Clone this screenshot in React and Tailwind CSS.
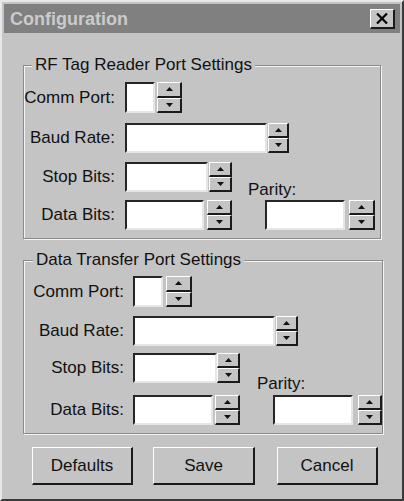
import React from "react";

const font = { fontFamily: '"Liberation Sans", Arial, sans-serif' };

function Box({ w }) {
  return (
    <div
      className={`${w} h-full bg-white border-2 border-t-[#262626] border-l-[#262626] border-r-[#e6e6e6] border-b-[#e6e6e6] shrink-0`}
    />
  );
}

function Btn({ up }) {
  return (
    <div className="flex-1 flex items-center justify-center bg-[#c4c4c4] border-t border-l border-t-white border-l-white border-r-2 border-b-2 border-r-[#1a1a1a] border-b-[#1a1a1a]">
      <svg width="7" height="4" viewBox="0 0 7 4">
        {up ? <path d="M0 4 L3.5 0 L7 4 Z" fill="#111" /> : <path d="M0 0 L7 0 L3.5 4 Z" fill="#111" />}
      </svg>
    </div>
  );
}

function Spin({ w, cls = "" }) {
  return (
    <div className={`${w} h-full flex flex-col shrink-0 ${cls}`}>
      <Btn up />
      <Btn />
    </div>
  );
}

function Label({ w, mr, children }) {
  return (
    <div className={`${w} ${mr} shrink-0 text-right text-[17px] leading-[20px] text-[#111]`}>{children}</div>
  );
}

function Group({ legend, w, legendMl, children, cls }) {
  return (
    <fieldset
      className={`${w} ${cls} border border-[#8a8a8a] shadow-[inset_1px_1px_0_#f4f4f4,1px_1px_0_#f4f4f4]`}
    >
      <legend className={`${legendMl} px-[3px] bg-[#c4c4c4] text-[17px] leading-[20px] text-[#111]`}>{legend}</legend>
      {children}
    </fieldset>
  );
}

export default function App() {
  return (
    <div style={font} className="w-[404px] h-[501px] bg-[#c4c4c4] border-2 border-t-[#e8e8e8] border-l-[#e8e8e8] border-r-[#3a3a3a] border-b-[#3a3a3a] p-[2px] flex flex-col">
      {/* title bar */}
      <div className="h-[29px] bg-[#808080] flex items-center justify-between pl-[6px] pr-[5px] shrink-0">
        <span className="text-[18px] font-bold text-[#cbcbcb] leading-none">Configuration</span>
        <div className="w-[25px] h-[20px] bg-[#c4c4c4] border-t border-l border-t-white border-l-white border-r-2 border-b-2 border-r-[#1a1a1a] border-b-[#1a1a1a] flex items-center justify-center">
          <svg width="12" height="11" viewBox="0 0 12 11">
            <path d="M1 0.5 L11 10.5 M11 0.5 L1 10.5" stroke="#000" strokeWidth="2.2" />
          </svg>
        </div>
      </div>

      {/* group 1 */}
      <Group legend="RF Tag Reader Port Settings" w="w-[358px]" legendMl="ml-[8px]" cls="ml-[19px] mt-[22px]">
        <div className="pt-[7px] pb-[8px]">
          <div className="h-[31px] flex items-center">
            <Label w="w-[91px]" mr="mr-[10px]">Comm Port:</Label>
            <Box w="w-[30px]" />
            <Spin w="w-[25px]" cls="ml-[2px]" />
          </div>
          <div className="h-[30px] mt-[10px] flex items-center">
            <Label w="w-[91px]" mr="mr-[10px]">Baud Rate:</Label>
            <Box w="w-[142px]" />
            <Spin w="w-[21px]" cls="ml-[1px]" />
          </div>
          <div className="h-[30px] mt-[9px] flex items-center">
            <Label w="w-[91px]" mr="mr-[10px]">Stop Bits:</Label>
            <Box w="w-[83px]" />
            <Spin w="w-[23px]" cls="ml-[1px]" />
            <div className="ml-[16px] self-start mt-[18px] text-[17px] leading-[20px] text-[#111]">Parity:</div>
          </div>
          <div className="h-[30px] mt-[8px] flex items-center">
            <Label w="w-[91px]" mr="mr-[10px]">Data Bits:</Label>
            <Box w="w-[79px]" />
            <Spin w="w-[25px]" cls="ml-[3px]" />
            <div className="ml-[33px] h-full flex">
              <Box w="w-[80px]" />
            </div>
            <Spin w="w-[26px]" cls="ml-[4px]" />
          </div>
        </div>
      </Group>

      {/* group 2 */}
      <Group legend="Data Transfer Port Settings" w="w-[360px]" legendMl="ml-[9px]" cls="ml-[19px] mt-[11px]">
        <div className="pt-[6px] pb-[8px]">
          <div className="h-[31px] flex items-center">
            <Label w="w-[100px]" mr="mr-[9px]">Comm Port:</Label>
            <Box w="w-[30px]" />
            <Spin w="w-[26px]" cls="ml-[3px]" />
          </div>
          <div className="h-[30px] mt-[9px] flex items-center">
            <Label w="w-[100px]" mr="mr-[9px]">Baud Rate:</Label>
            <Box w="w-[142px]" />
            <Spin w="w-[22px]" cls="ml-[1px]" />
          </div>
          <div className="h-[30px] mt-[7px] flex items-center">
            <Label w="w-[100px]" mr="mr-[9px]">Stop Bits:</Label>
            <Box w="w-[84px]" />
            <Spin w="w-[23px]" />
            <div className="ml-[17px] self-start mt-[21px] text-[17px] leading-[20px] text-[#111]">Parity:</div>
          </div>
          <div className="h-[30px] mt-[12px] flex items-center">
            <Label w="w-[100px]" mr="mr-[9px]">Data Bits:</Label>
            <Box w="w-[80px]" />
            <Spin w="w-[25px]" cls="ml-[2px]" />
            <div className="ml-[33px] h-full flex">
              <Box w="w-[80px]" />
            </div>
            <Spin w="w-[24px]" cls="ml-[5px]" />
          </div>
        </div>
      </Group>

      {/* buttons */}
      <div className="flex mt-[13px] ml-[28px]">
        {[
          ["Defaults", "w-[101px]", ""],
          ["Save", "w-[102px]", "ml-[20px]"],
          ["Cancel", "w-[101px]", "ml-[22px]"],
        ].map(([t, w, m]) => (
          <div
            key={t}
            className={`${w} ${m} h-[38px] flex items-center justify-center text-[17px] text-[#111] bg-[#c4c4c4] border-t border-l border-t-white border-l-white border-r-2 border-b-2 border-r-[#1a1a1a] border-b-[#1a1a1a]`}
          >
            {t}
          </div>
        ))}
      </div>
    </div>
  );
}
